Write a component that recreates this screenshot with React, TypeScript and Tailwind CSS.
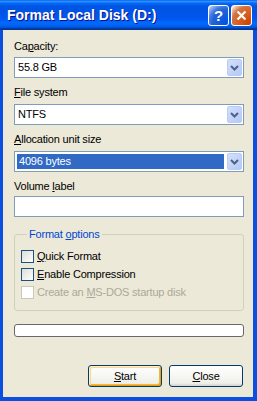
import React from 'react'

const font = 'font-["Liberation_Sans",Arial,sans-serif]'

function Chevron() {
  return (
    <svg width="9" height="6" viewBox="0 0 9 6">
      <polyline points="1,1 4.5,4.5 8,1" fill="none" stroke="#4D6185" strokeWidth="2" />
    </svg>
  )
}

function Combo({ value, selected }: { value: string; selected?: boolean }) {
  return (
    <div className="flex h-[21px] items-stretch border border-[#7F9DB9] bg-white p-px">
      <div
        className={
          selected
            ? 'flex flex-1 items-center bg-[#316AC5] pl-[2px] text-white mr-[3px] my-px ml-px'
            : 'flex flex-1 items-center pl-[2px] text-black'
        }
      >
        {value}
      </div>
      <div className="flex w-[15px] items-center justify-center rounded-[2px] border border-[#B9CCF6] bg-[linear-gradient(135deg,#D3E0FB,#B5C8F6)]">
        <Chevron />
      </div>
    </div>
  )
}

function Label({ children, className = '' }: { children: React.ReactNode; className?: string }) {
  return <div className={'h-[13px] leading-[13px] ' + className}>{children}</div>
}

function Check({ children, disabled }: { children: React.ReactNode; disabled?: boolean }) {
  return (
    <div className="flex h-[13px] items-center gap-[3px]">
      <div
        className={
          disabled
            ? 'h-[13px] w-[13px] border border-[#CAC8BB] bg-white'
            : 'h-[13px] w-[13px] border border-[#1C5180] bg-[linear-gradient(135deg,#DCDCD7,#FFFFFF)]'
        }
      />
      <span className={disabled ? 'leading-[13px] text-[#ACA899]' : 'leading-[13px] text-black'}>{children}</span>
    </div>
  )
}

function U({ children }: { children: React.ReactNode }) {
  return <span className="underline underline-offset-[1px]">{children}</span>
}

export default function App() {
  return (
    <div className={'flex h-[401px] w-[257px] flex-col bg-[#0A4FE0] ' + font}>
      {/* title bar */}
      <div className="flex h-[30px] items-center justify-between bg-[linear-gradient(to_bottom,#0058EE_0%,#3593FF_4%,#288EFF_6%,#127DFF_8%,#036FFC_10%,#0262EE_14%,#0057E5_20%,#0054E3_24%,#0055EB_56%,#005BF5_66%,#026AFE_76%,#0062EF_86%,#0052D6_92%,#0040AB_94%,#003092_100%)] pl-[7px] pr-[5px]">
        <span className="text-[14px] font-bold text-white [text-shadow:1px_1px_#0F1089]">Format Local Disk (D:)</span>
        <div className="flex gap-[2px]">
          <div className="flex h-[21px] w-[21px] items-center justify-center rounded-[3px] border border-white bg-[radial-gradient(circle_at_90%_90%,#0054E9_0%,#2263D5_55%,#4479E4_70%,#A3BBEC_90%,#FFFFFF_100%)] text-[15px] font-bold leading-none text-white">
            ?
          </div>
          <div className="flex h-[21px] w-[21px] items-center justify-center rounded-[3px] border border-white bg-[radial-gradient(circle_at_90%_90%,#CC4600_0%,#DC6527_55%,#CD7546_70%,#FFCCB2_90%,#FFFFFF_100%)]">
            <svg width="11" height="11" viewBox="0 0 11 11">
              <path d="M1.5 1.5 L9.5 9.5 M9.5 1.5 L1.5 9.5" stroke="white" strokeWidth="2.2" />
            </svg>
          </div>
        </div>
      </div>

      {/* body */}
      <div className="mb-[4px] ml-[3px] mr-[4px] flex flex-1 flex-col bg-[#ECE9D8] pl-[11px] pr-[9px] text-[11px] tracking-[-0.2px] text-black">
        <Label className="mt-[10px]">
          Ca<U>p</U>acity:
        </Label>
        <div className="mt-[4px]">
          <Combo value="55.8 GB" />
        </div>

        <Label className="mt-[8px]">
          <U>F</U>ile system
        </Label>
        <div className="mt-[5px]">
          <Combo value="NTFS" />
        </div>

        <Label className="mt-[8px]">
          <U>A</U>llocation unit size
        </Label>
        <div className="mt-[5px]">
          <Combo value="4096 bytes" selected />
        </div>

        <Label className="mt-[8px]">
          Volume <U>l</U>abel
        </Label>
        <div className="mt-[3px] h-[21px] border border-[#7F9DB9] bg-white" />

        <fieldset className="mt-[11px] rounded-[3px] border border-[#D0D0BF] pb-[11px] pl-[6px] pt-[9px]">
          <legend className="ml-[6px] px-[2px] leading-[13px] text-[#0046D5]">
            Format <U>o</U>ptions
          </legend>
          <div className="flex flex-col gap-[5px]">
            <Check>
              <U>Q</U>uick Format
            </Check>
            <Check>
              <U>E</U>nable Compression
            </Check>
            <Check disabled>
              Create an <U>M</U>S-DOS startup disk
            </Check>
          </div>
        </fieldset>

        <div className="mt-[13px] h-[13px] rounded-[3px] border border-[#686868] bg-white" />

        <div className="mt-[28px] flex justify-end gap-[7px] pr-px">
          <div className="flex h-[22px] w-[74px] items-center justify-center rounded-[3px] border border-[#003C74] bg-[linear-gradient(to_bottom,#FFFFFF,#F0F0EA_85%,#D6D0C5)] shadow-[inset_1px_1px_#FFF0CF,inset_-1px_-1px_#E5A01A,inset_2px_2px_#FDD889,inset_-2px_-2px_#F8B636]">
            <U>S</U>tart
          </div>
          <div className="flex h-[22px] w-[74px] items-center justify-center rounded-[3px] border border-[#003C74] bg-[linear-gradient(to_bottom,#FFFFFF,#F0F0EA_85%,#D6D0C5)]">
            <U>C</U>lose
          </div>
        </div>
      </div>
    </div>
  )
}
